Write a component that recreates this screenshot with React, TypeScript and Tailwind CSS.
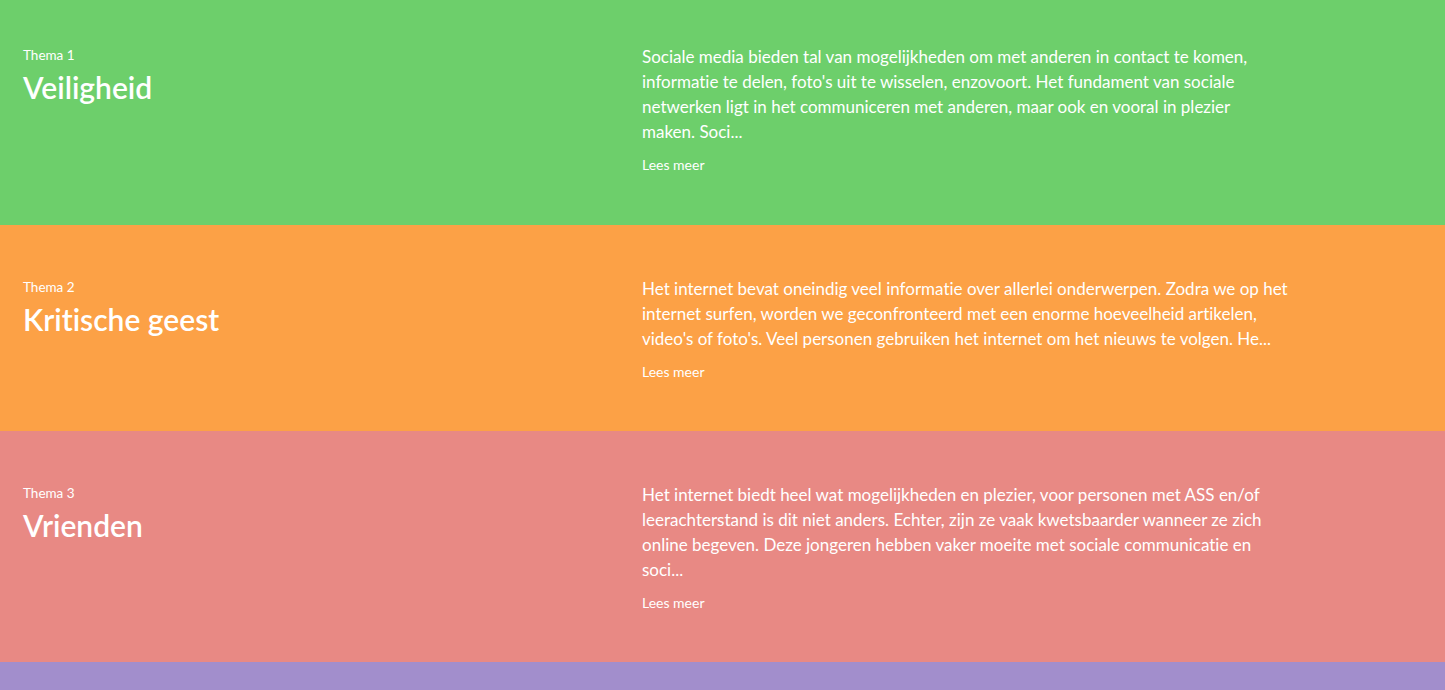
const themes = [
  {
    label: "Thema 1",
    title: "Veiligheid",
    text: "Sociale media bieden tal van mogelijkheden om met anderen in contact te komen, informatie te delen, foto's uit te wisselen, enzovoort. Het fundament van sociale netwerken ligt in het communiceren met anderen, maar ook en vooral in plezier maken. Soci...",
    bg: "bg-[#6dcf6b]",
    pad: "pt-[44px] pb-[50px]",
    width: "max-w-[640px]",
  },
  {
    label: "Thema 2",
    title: "Kritische geest",
    text: "Het internet bevat oneindig veel informatie over allerlei onderwerpen. Zodra we op het internet surfen, worden we geconfronteerd met een enorme hoeveelheid artikelen, video's of foto's. Veel personen gebruiken het internet om het nieuws te volgen. He...",
    bg: "bg-[#fca146]",
    pad: "pt-[51px] pb-[49px]",
    width: "max-w-[652px]",
  },
  {
    label: "Thema 3",
    title: "Vrienden",
    text: "Het internet biedt heel wat mogelijkheden en plezier, voor personen met ASS en/of leerachterstand is dit niet anders. Echter, zijn ze vaak kwetsbaarder wanneer ze zich online begeven. Deze jongeren hebben vaker moeite met sociale communicatie en soci...",
    bg: "bg-[#e88984]",
    pad: "pt-[51px] pb-[49px]",
    width: "max-w-[645px]",
  },
];

export default function App() {
  return (
    <div className="min-h-screen bg-[#a28ecc] font-['Lato','Open_Sans',sans-serif] text-white [font-variant-ligatures:none]">
      {themes.map((t) => (
        <section key={t.label} className={`${t.bg} ${t.pad} px-[23px]`}>
          <div className="grid grid-cols-[619px_1fr]">
            <div className="pt-[2px]">
              <p className="text-[13.5px] leading-[18px]">{t.label}</p>
              <h2 className="mt-[5px] text-[30px] leading-[36px] font-semibold">{t.title}</h2>
            </div>
            <div className={t.width}>
              <p className="text-[17px] leading-[25px]">{t.text}</p>
              <a href="#" className="mt-[11px] block text-[14px] leading-[20px]">
                Lees meer
              </a>
            </div>
          </div>
        </section>
      ))}
      <section className="h-[200px] bg-[#a28ecc]" />
    </div>
  );
}
